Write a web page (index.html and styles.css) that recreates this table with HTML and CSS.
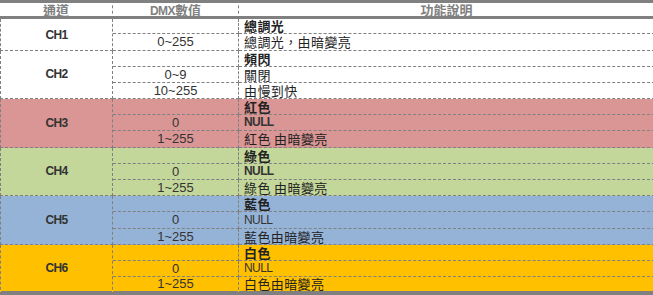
FILE: index.html
```html
<!DOCTYPE html>
<html lang="zh-Hant">
<head>
<meta charset="utf-8">
<title>DMX 通道表</title>
<link rel="stylesheet" href="styles.css">
</head>
<body>
<table class="dmx">
  <thead>
    <tr>
      <th class="col-ch">通道</th>
      <th class="col-val"><span class="narrow">DMX</span>數值</th>
      <th class="col-desc">功能說明</th>
    </tr>
  </thead>
  <tbody class="grp grp-white">
    <tr class="r-first">
      <td class="ch" rowspan="2">CH1</td>
      <td class="val"></td>
      <td class="desc strong">總調光</td>
    </tr>
    <tr class="r-tall">
      <td class="val">0~255</td>
      <td class="desc">總調光，由暗變亮</td>
    </tr>
  </tbody>
  <tbody class="grp grp-white">
    <tr>
      <td class="ch" rowspan="3">CH2</td>
      <td class="val"></td>
      <td class="desc strong">頻閃</td>
    </tr>
    <tr>
      <td class="val">0~9</td>
      <td class="desc">關閉</td>
    </tr>
    <tr>
      <td class="val">10~255</td>
      <td class="desc">由慢到快</td>
    </tr>
  </tbody>
  <tbody class="grp grp-red">
    <tr>
      <td class="ch" rowspan="3">CH3</td>
      <td class="val"></td>
      <td class="desc strong">紅色</td>
    </tr>
    <tr>
      <td class="val">0</td>
      <td class="desc null strong">NULL</td>
    </tr>
    <tr class="r-tall">
      <td class="val">1~255</td>
      <td class="desc">紅色 由暗變亮</td>
    </tr>
  </tbody>
  <tbody class="grp grp-green">
    <tr>
      <td class="ch" rowspan="3">CH4</td>
      <td class="val"></td>
      <td class="desc strong">綠色</td>
    </tr>
    <tr>
      <td class="val">0</td>
      <td class="desc null strong">NULL</td>
    </tr>
    <tr>
      <td class="val">1~255</td>
      <td class="desc">綠色 由暗變亮</td>
    </tr>
  </tbody>
  <tbody class="grp grp-blue">
    <tr>
      <td class="ch" rowspan="3">CH5</td>
      <td class="val"></td>
      <td class="desc strong">藍色</td>
    </tr>
    <tr class="r-tall">
      <td class="val">0</td>
      <td class="desc null">NULL</td>
    </tr>
    <tr>
      <td class="val">1~255</td>
      <td class="desc">藍色由暗變亮</td>
    </tr>
  </tbody>
  <tbody class="grp grp-gold">
    <tr>
      <td class="ch" rowspan="3">CH6</td>
      <td class="val"></td>
      <td class="desc strong">白色</td>
    </tr>
    <tr>
      <td class="val">0</td>
      <td class="desc null">NULL</td>
    </tr>
    <tr class="r-last">
      <td class="val">1~255</td>
      <td class="desc">白色由暗變亮</td>
    </tr>
  </tbody>
</table>
</body>
</html>
```

FILE: styles.css
```css
html, body {
  margin: 0;
  padding: 0;
  background: #ffffff;
}

body {
  font-family: "Liberation Sans", Arial, "Noto Sans CJK TC", sans-serif;
  font-size: 13px;
  color: #222222;
}

.dmx {
  width: 653px;
  border-collapse: separate;
  border-spacing: 0;
  table-layout: fixed;
}

.dmx th,
.dmx td {
  padding: 0;
  border-right: 1px dashed #808080;
  border-bottom: 1px dashed #808080;
  line-height: 15px;
  white-space: nowrap;
}

.dmx th {
  height: 13px;
  font-family: "Noto Sans CJK TC", sans-serif;
  font-weight: bold;
  font-size: 13px;
  line-height: 13px;
  color: #808080;
  text-align: center;
  border-top: 3px solid #808080;
  border-bottom: 3px solid #808080;
}

.col-ch { width: 112px; }
.col-val { width: 125px; }
.col-desc { width: 415px; }

.narrow {
  font-family: "Liberation Sans", sans-serif;
  font-size: 12px;
  line-height: 8px;
  letter-spacing: -0.6px;
}

.dmx td.ch {
  border-left: 1px dashed #808080;
  text-align: center;
  vertical-align: middle;
  font-family: "Liberation Sans", sans-serif;
  font-weight: bold;
  font-size: 12px;
  letter-spacing: -0.7px;
  color: #333333;
}

.dmx td.val {
  text-align: center;
  color: #333333;
}

.dmx td.desc {
  padding-left: 5px;
  font-family: "Noto Sans CJK TC", sans-serif;
  font-size: 13px;
  letter-spacing: 0.4px;
  color: #222222;
}

.dmx td.strong {
  font-weight: bold;
}

.dmx td.null {
  font-family: "Liberation Sans", sans-serif;
  font-size: 12px;
  letter-spacing: -0.6px;
  color: #333333;
}

.r-first td { line-height: 14px; }
.r-tall td { line-height: 16px; }
.r-last td {
  line-height: 14px;
}
.r-last td.val,
.r-last td.desc,
.grp-gold td.ch { border-bottom: 4px solid #808080; }

.grp-white td { background: #ffffff; }
.grp-red td { background: #da9694; }
.grp-green td { background: #c4d79b; }
.grp-blue td { background: #95b3d7; }
.grp-gold td { background: #ffc000; }
```
